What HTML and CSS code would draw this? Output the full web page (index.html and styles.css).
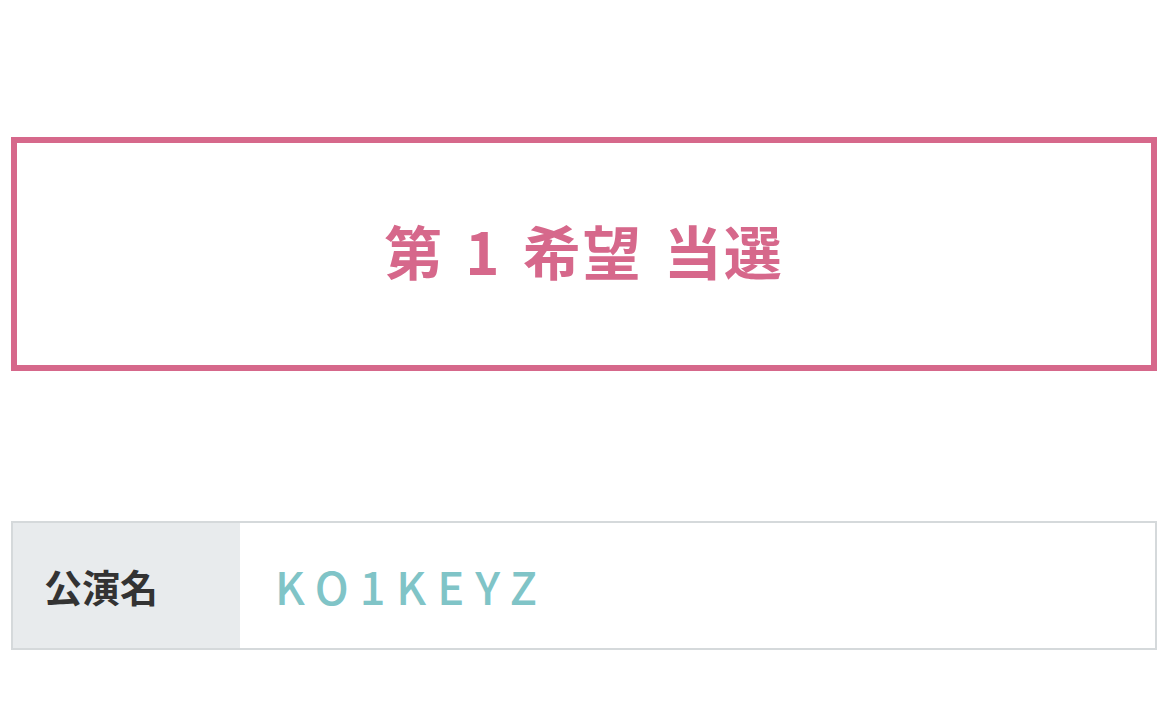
FILE: index.html
```html
<!DOCTYPE html>
<html lang="ja">
<head>
    <meta charset="UTF-8">
    <meta name="viewport" content="width=device-width, initial-scale=1.0">
    <title>当選結果</title>
    <link rel="stylesheet" href="styles.css">
</head>
<body>
    <div class="result">
        <p class="result-title">第 1 希望 当選</p>
    </div>

    <table class="detail">
        <tr>
            <th>公演名</th>
            <td>KO1KEYZ</td>
        </tr>
    </table>
</body>
</html>
```

FILE: styles.css
```css
body {
    font-family: "Noto Sans CJK JP", "Noto Sans", sans-serif;
    margin: 0;
    padding: 137px 8px 0 11px;
    background-color: #fff;
    color: #333;
}
.result {
    border: 6px solid #d6688b;
    height: 214px;
    padding-bottom: 8px;
    display: flex;
    align-items: center;
    justify-content: center;
}
.result-title {
    margin: 0;
    color: #d6688b;
    font-size: 58px;
    font-weight: bold;
    letter-spacing: 2px;
    word-spacing: 6px;
}
.detail {
    width: 100%;
    margin-top: 150px;
    border-collapse: collapse;
    border: 2px solid #d5d9db;
}
.detail th, .detail td {
    height: 125px;
    padding: 0;
    text-align: left;
}
.detail th {
    width: 228px;
    background-color: #e8ebed;
    padding-left: 31px;
    box-sizing: border-box;
    font-size: 38px;
    font-weight: bold;
    color: #333;
}
.detail td {
    padding-left: 35px;
    font-size: 45px;
    color: #80c4c7;
    letter-spacing: 11px;
    font-weight: 500;
}
```
